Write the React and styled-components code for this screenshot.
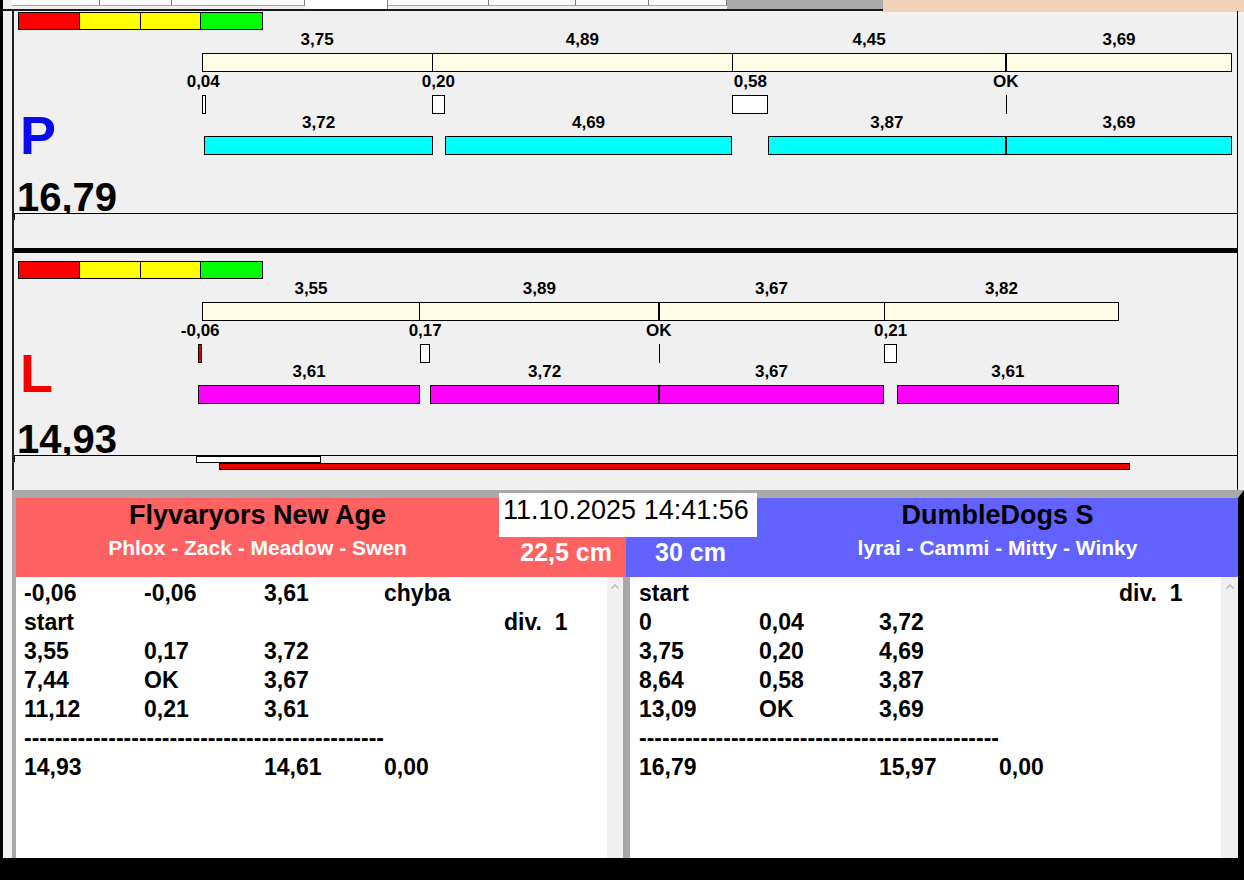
import React from "react";
import styled, { createGlobalStyle } from "styled-components";

const GlobalStyle = createGlobalStyle`
  html, body { margin: 0; padding: 0; background: #000; }
  body { font-family: "Liberation Sans", Arial, sans-serif; }
  * { box-sizing: border-box; }
`;

const SCALE = 61.4;
const fmt = (v) => (v === 0 ? "OK" : v.toFixed(2).replace(".", ","));

/* ---------- frame ---------- */
const Screen = styled.div`
  width: 1244px;
  height: 880px;
  background: #f0f0f0;
  border-left: 3px solid #000;
  border-bottom: 22px solid #000;
  display: flex;
  flex-direction: column;
  overflow: hidden;
  font-family: "Liberation Sans", Arial, sans-serif;
  color: #000;
`;

/* ---------- tab strip (cut off at top) ---------- */
const TabBar = styled.div`
  display: flex;
  height: 11px;
  flex: none;
`;
const TabStrip = styled.div`
  display: flex;
  align-items: flex-start;
  width: 724px;
  padding-left: 9px;
  border-bottom: 2px solid #1a1a1a;
`;
const Tab = styled.div`
  width: ${(p) => p.$w}px;
  height: ${(p) => (p.$active ? 9 : 6)}px;
  background: ${(p) => (p.$active ? "#ffffff" : "#fbfbfb")};
  border-right: 1px solid #7c7c7c;
  border-bottom: ${(p) => (p.$active ? "none" : "1px solid #a6a6a6")};
`;
const TabFill = styled.div`
  width: 156px;
  background: #ababab;
  border-bottom: 2px solid #1a1a1a;
`;
const Peach = styled.div`
  flex: 1;
  height: 12px;
  background: #f1d2b6;
`;

/* ---------- lanes ---------- */
const Lanes = styled.div`
  flex: none;
  margin: 0 6px 0 9px;
  border-left: 2px solid #222;
  border-right: 1px solid #000;
  display: flex;
  flex-direction: column;
`;
const LaneDivider = styled.div`
  position: relative;
  height: 5px;
  background: #000;
`;
const LaneBox = styled.div`
  height: 237px;
  display: flex;
  flex-direction: column;
  padding-top: ${(p) => p.$padTop}px;
`;
const Strip = styled.div`
  display: flex;
  align-self: flex-start;
  margin-left: 4px;
  height: 18px;
  border: 1px solid #000;
`;
const StripCell = styled.div`
  width: ${(p) => p.$w}px;
  background: ${(p) => p.$c};
  & + & { border-left: 1px solid #000; }
`;
const LaneBody = styled.div`
  flex: 1;
  display: flex;
  min-height: 0;
`;
const LeftCol = styled.div`
  width: 188px;
  flex: none;
  display: flex;
  flex-direction: column;
  justify-content: flex-end;
  padding: 0 0 15px 6px;
`;
const Letter = styled.div`
  font-size: 54px;
  line-height: 54px;
  font-weight: bold;
  color: ${(p) => p.$color};
`;
const ChartCanvas = styled.div`
  position: relative;
  flex: 1;
`;
const BarLabel = styled.div`
  position: absolute;
  top: ${(p) => p.$top}px;
  transform: translateX(-50%);
  font-size: 17px;
  line-height: 20px;
  font-weight: bold;
  white-space: nowrap;
`;
const LegBar = styled.div`
  position: absolute;
  left: 0;
  top: 23px;
  height: 19px;
  background: #fffde6;
  border: 1px solid #000;
`;
const LegDivider = styled.div`
  position: absolute;
  top: 23px;
  height: 19px;
  width: ${(p) => (p.$ok ? 2 : 1)}px;
  background: #000;
`;
const SplitBox = styled.div`
  position: absolute;
  top: 65px;
  height: 19px;
  background: ${(p) => (p.$neg ? "#e00000" : "#ffffff")};
  border: 1px solid #000;
`;
const SplitLine = styled.div`
  position: absolute;
  top: 65px;
  height: 19px;
  width: 1px;
  background: #000;
`;
const RunBar = styled.div`
  position: absolute;
  top: 106px;
  height: 19px;
  background: ${(p) => p.$color};
  border: 1px solid #000;
`;
const Total = styled.div`
  height: ${(p) => p.$h}px;
  flex: none;
  font-size: 40px;
  line-height: 40px;
  font-weight: bold;
  padding-top: ${(p) => p.$h - 36}px;
  padding-left: 3px;
  white-space: nowrap;
`;
const ProgressBox = styled.div`
  position: relative;
  height: 35px;
  flex: none;
  background: #f0f0f0;
  border-top: 1px solid #000;
  display: flex;
  flex-direction: column;
  &::before {
    content: "";
    position: absolute;
    left: 0;
    top: 0;
    width: 1px;
    height: 6px;
    background: #000;
  }
`;
const LapMark = styled.div`
  margin-left: 182px;
  width: 125px;
  height: 7px;
  background: #fff;
  border: 1px solid #000;
`;
const TimeBar = styled.div`
  margin-left: 205px;
  width: 911px;
  height: 7px;
  background: #ee0000;
  border: 1px solid #000;
`;

function Chart({ legs, splits, runs, runColor }) {
  const cum = [0];
  legs.forEach((l) => cum.push(cum[cum.length - 1] + l));
  const total = cum[cum.length - 1];
  const x = (v) => v * SCALE;
  return (
    <ChartCanvas>
      {legs.map((l, i) => (
        <BarLabel key={"ll" + i} $top={0} style={{ left: x(cum[i] + l / 2) }}>
          {fmt(l)}
        </BarLabel>
      ))}
      <LegBar style={{ width: x(total) }} />
      {cum.slice(1, -1).map((c, i) => (
        <LegDivider
          key={"ld" + i}
          $ok={splits[i + 1] === 0}
          style={{ left: x(c) - (splits[i + 1] === 0 ? 1 : 0.5) }}
        />
      ))}
      {splits.map((s, i) => (
        <BarLabel key={"sl" + i} $top={42} style={{ left: x(cum[i] + s / 2) }}>
          {fmt(s)}
        </BarLabel>
      ))}
      {splits.map((s, i) =>
        s === 0 ? (
          <SplitLine key={"sb" + i} style={{ left: x(cum[i]) }} />
        ) : (
          <SplitBox
            key={"sb" + i}
            $neg={s < 0}
            style={{
              left: s < 0 ? x(cum[i] + s) : x(cum[i]),
              width: Math.max(Math.abs(x(s)), 3.5),
            }}
          />
        )
      )}
      {runs.map((r, i) => (
        <BarLabel key={"rl" + i} $top={83} style={{ left: x(cum[i] + splits[i] + r / 2) }}>
          {fmt(r)}
        </BarLabel>
      ))}
      {runs.map((r, i) => (
        <RunBar
          key={"rb" + i}
          $color={runColor}
          style={{ left: x(cum[i] + splits[i]), width: x(r) }}
        />
      ))}
    </ChartCanvas>
  );
}

function Lane({ letter, color, total, padTop, totalH, data, runColor, progress }) {
  return (
    <LaneBox $padTop={padTop}>
      <Strip>
        <StripCell $w={60} $c="#ff0000" />
        <StripCell $w={61} $c="#ffff00" />
        <StripCell $w={60} $c="#ffff00" />
        <StripCell $w={62} $c="#00ff00" />
      </Strip>
      <LaneBody>
        <LeftCol>
          <Letter $color={color}>{letter}</Letter>
        </LeftCol>
        <Chart {...data} runColor={runColor} />
      </LaneBody>
      <Total $h={totalH}>{total}</Total>
      <ProgressBox>
        {progress && (
          <>
            <LapMark />
            <TimeBar />
          </>
        )}
      </ProgressBox>
    </LaneBox>
  );
}

/* ---------- results ---------- */
const Bottom = styled.section`
  position: relative;
  flex: none;
  height: 368px;
  margin-left: 9px;
  border-top: 8px solid #a9a9a9;
  border-left: 4px solid #a9a9a9;
  border-right: 6px solid #000;
  display: grid;
  grid-template-columns: 610px 612px;
  grid-template-rows: 79px 281px;
`;
const TeamHeader = styled.div`
  display: grid;
  grid-template-columns: ${(p) => (p.$side === "left" ? "483px 1fr" : "131px 1fr")};
  background: ${(p) => p.$bg};
`;
const TeamInfo = styled.div`
  display: flex;
  flex-direction: column;
  align-items: center;
  order: ${(p) => (p.$side === "left" ? 0 : 1)};
`;
const TeamName = styled.div`
  margin-top: 1px;
  font-size: 27px;
  line-height: 32px;
  font-weight: bold;
  color: #000;
  white-space: nowrap;
`;
const Players = styled.div`
  margin-top: 4px;
  font-size: 21px;
  line-height: 26px;
  font-weight: bold;
  color: #fff;
  white-space: nowrap;
`;
const Height = styled.div`
  padding-top: 39px;
  font-size: 25px;
  line-height: 30px;
  font-weight: bold;
  color: #fff;
  white-space: nowrap;
  text-align: ${(p) => (p.$side === "left" ? "right" : "left")};
  padding-right: ${(p) => (p.$side === "left" ? 14 : 0)}px;
  padding-left: ${(p) => (p.$side === "left" ? 0 : 29)}px;
`;
const DateStamp = styled.div`
  position: absolute;
  top: -5px;
  left: 483px;
  width: 258px;
  height: 44px;
  background: #fff;
  padding-left: 4px;
  font-size: 27px;
  line-height: 34px;
  white-space: nowrap;
  z-index: 1;
`;
const ListPane = styled.div`
  display: flex;
  min-width: 0;
  border-right: ${(p) => (p.$side === "left" ? "3px solid #a9a9a9" : "none")};
  border-left: ${(p) => (p.$side === "right" ? "4px solid #a9a9a9" : "none")};
  overflow: hidden;
`;
const ListBody = styled.div`
  flex: 1;
  min-width: 0;
  overflow: hidden;
  background: #fff;
  padding: 2px 0 0 ${(p) => p.$pad}px;
`;
const ResultRow = styled.div`
  display: grid;
  grid-template-columns: repeat(4, 120px) 1fr;
  height: 29px;
  font-size: 23px;
  line-height: 29px;
  font-weight: bold;
  white-space: pre;
`;
const DashCell = styled.div`
  grid-column: 1 / -1;
`;
const Scrollbar = styled.div`
  width: ${(p) => p.$w}px;
  flex: none;
  background: #f0f0f0;
  display: flex;
  justify-content: center;
  align-items: flex-start;
  padding-top: 6px;
`;

function ScrollUp() {
  return (
    <svg width="10" height="7" viewBox="0 0 10 7">
      <polyline points="1.5,5.5 5,2 8.5,5.5" fill="none" stroke="#b9b9b9" strokeWidth="1.4" />
    </svg>
  );
}

const DASHES = "-".repeat(47);

function ResultList({ rows, pad, side, scrollW }) {
  return (
    <ListPane $side={side}>
      <ListBody $pad={pad}>
        {rows.map((r, i) => (
          <ResultRow key={i}>
            {r === "dash" ? (
              <DashCell>{DASHES}</DashCell>
            ) : (
              r.map((c, j) => <div key={j}>{c}</div>)
            )}
          </ResultRow>
        ))}
      </ListBody>
      <Scrollbar $w={scrollW}>
        <ScrollUp />
      </Scrollbar>
    </ListPane>
  );
}

const laneP = {
  legs: [3.75, 4.89, 4.45, 3.69],
  splits: [0.04, 0.2, 0.58, 0],
  runs: [3.72, 4.69, 3.87, 3.69],
};
const laneL = {
  legs: [3.55, 3.89, 3.67, 3.82],
  splits: [-0.06, 0.17, 0, 0.21],
  runs: [3.61, 3.72, 3.67, 3.61],
};

const leftRows = [
  ["-0,06", "-0,06", "3,61", "chyba", ""],
  ["start", "", "", "", "div.  1"],
  ["3,55", "0,17", "3,72"],
  ["7,44", "OK", "3,67"],
  ["11,12", "0,21", "3,61"],
  "dash",
  ["14,93", "", "14,61", "0,00"],
];
const rightRows = [
  ["start", "", "", "", "div.  1"],
  ["0", "0,04", "3,72"],
  ["3,75", "0,20", "4,69"],
  ["8,64", "0,58", "3,87"],
  ["13,09", "OK", "3,69"],
  "dash",
  ["16,79", "", "15,97", "0,00"],
];

const tabs = [88, 72, 133, 83, 101, 87, 73, 78];

export default function App() {
  return (
    <>
      <GlobalStyle />
      <Screen>
        <TabBar>
          <TabStrip>
            {tabs.map((w, i) => (
              <Tab key={i} $w={w} $active={i === 3} />
            ))}
          </TabStrip>
          <TabFill />
          <Peach />
        </TabBar>
        <Lanes>
          <Lane
            letter="P"
            color="#0a0aee"
            total="16,79"
            padTop={1}
            totalH={36}
            data={laneP}
            runColor="#00ffff"
          />
          <LaneDivider />
          <Lane
            letter="L"
            color="#f50000"
            total="14,93"
            padTop={8}
            totalH={40}
            data={laneL}
            runColor="#ff00ff"
            progress
          />
        </Lanes>
        <Bottom>
          <DateStamp>11.10.2025 14:41:56</DateStamp>
          <TeamHeader $side="left" $bg="#ff6262">
            <TeamInfo $side="left">
              <TeamName>Flyvaryors New Age</TeamName>
              <Players>Phlox - Zack - Meadow - Swen</Players>
            </TeamInfo>
            <Height $side="left">22,5 cm</Height>
          </TeamHeader>
          <TeamHeader $side="right" $bg="#6262ff">
            <TeamInfo $side="right">
              <TeamName>DumbleDogs S</TeamName>
              <Players>lyrai - Cammi - Mitty - Winky</Players>
            </TeamInfo>
            <Height $side="right">30 cm</Height>
          </TeamHeader>
          <ResultList rows={leftRows} pad={8} side="left" scrollW={16} />
          <ResultList rows={rightRows} pad={9} side="right" scrollW={17} />
        </Bottom>
      </Screen>
    </>
  );
}
